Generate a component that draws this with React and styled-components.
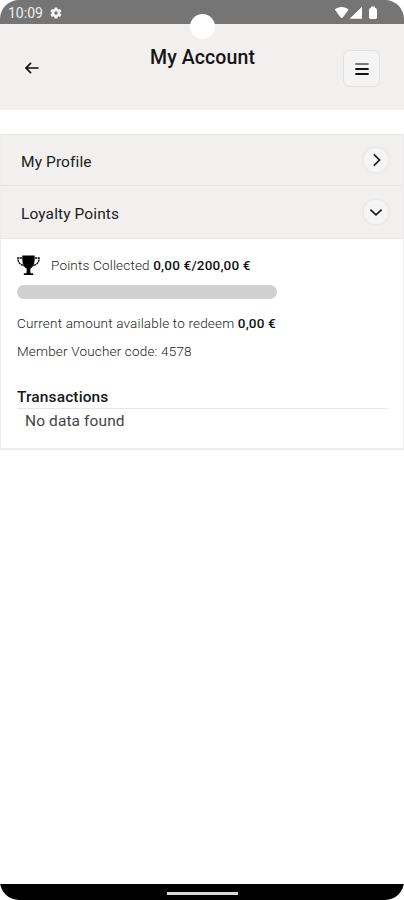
import React, { useState } from "react";
import styled, { createGlobalStyle } from "styled-components";

const account = {
  collected: "0,00 €",
  target: "200,00 €",
  redeemable: "0,00 €",
  voucher: "4578",
  progress: 0,
};

const GearIcon = () => (
  <svg width="14" height="14" viewBox="0 0 24 24" fill="#f5f5f5">
    <path d="M19.1 12.9a7 7 0 0 0 0-1.8l2-1.6a.5.5 0 0 0 .2-.6l-2-3.4a.5.5 0 0 0-.6-.2l-2.4 1a7 7 0 0 0-1.6-1l-.4-2.5a.5.5 0 0 0-.5-.4h-3.8a.5.5 0 0 0-.5.4l-.4 2.5a7 7 0 0 0-1.6 1l-2.4-1a.5.5 0 0 0-.6.2l-2 3.4a.5.5 0 0 0 .2.6l2 1.6a7 7 0 0 0 0 1.8l-2 1.6a.5.5 0 0 0-.2.6l2 3.4c.1.2.4.3.6.2l2.4-1a7 7 0 0 0 1.6 1l.4 2.5c0 .2.2.4.5.4h3.8c.3 0 .5-.2.5-.4l.4-2.5a7 7 0 0 0 1.6-1l2.4 1c.2.1.5 0 .6-.2l2-3.4a.5.5 0 0 0-.2-.6zM12 15a3 3 0 1 1 0-6 3 3 0 0 1 0 6z" />
  </svg>
);

const SignalIcons = () => (
  <svg width="44" height="14" viewBox="0 0 44 14" fill="#fff">
    <path d="M.8 3.6C4.2.2 11 .2 14.6 3.6L8.8 11.4Q7.7 12.8 6.6 11.4Z" />
    <path d="M28 .8V12.8H15.6Z" />
    <path d="M37.3.4h3.4v1.2Q43 2.6 43 4v7.6q0 1.4-1.4 1.4h-5.2q-1.4 0-1.4-1.4V4q0-1.4 2.3-2.4Z" />
  </svg>
);

const BackIcon = () => (
  <svg width="16" height="14" viewBox="0 0 16 14" fill="none" stroke="#111" strokeWidth="1.7">
    <path d="M7 1.8 2 7l5 5.2M2 7h12.6" />
  </svg>
);

const MenuIcon = () => (
  <svg width="14" height="14" viewBox="0 0 14 14" fill="none" strokeWidth="1.8" strokeLinecap="round">
    <path d="M1 2h12" stroke="#777" />
    <path d="M1 7h12M1 12h12" stroke="#111" />
  </svg>
);

const Chevron = ({ down }) => (
  <svg width="14" height="14" viewBox="0 0 14 14" fill="none" stroke="#1c1c1c" strokeWidth="1.7">
    <path d={down ? "M1.4 4.6 7 9.8l5.6-5.2" : "M4.9 1.4 10.5 7l-5.6 5.6"} />
  </svg>
);

const TrophyIcon = () => (
  <svg width="23" height="21" viewBox="0 0 23 21">
    <path d="M5.2 3H.9C.9 7.4 3 9.6 7.2 10.7M17.8 3h4.3C22.1 7.4 20 9.6 15.8 10.7" fill="none" stroke="#111" strokeWidth="1.4" strokeDasharray="2.4 .5" />
    <path d="M5.4.6h12.2c.5 6.4-.5 11.2-4.3 13.2v4.4h-3.6v-4.4C5.9 11.8 4.9 7 5.4.6z" />
    <path d="M9.7 16.8h3.6v1.4h2.9v1.7H6.8v-1.7h2.9z" />
  </svg>
);

export default function App() {
  const [open, setOpen] = useState(true);

  return (
    <>
      <GlobalStyle />
      <Phone>
        <StatusBar>
          <Clock>10:09</Clock>
          <GearIcon />
          <Signals><SignalIcons /></Signals>
          <Camera />
        </StatusBar>
        <Header>
          <BackButton aria-label="Back"><BackIcon /></BackButton>
          <Title>My Account</Title>
          <MenuButton aria-label="Menu"><MenuIcon /></MenuButton>
        </Header>
        <Accordion>
          <SectionRow>
            <SectionName>My Profile</SectionName>
            <Circle><Chevron /></Circle>
          </SectionRow>
          <SectionRow $last onClick={() => setOpen(!open)}>
            <SectionName>Loyalty Points</SectionName>
            <Circle><Chevron down={open} /></Circle>
          </SectionRow>
          {open && (
            <Panel>
              <Points>
                <TrophyIcon />
                <Info>
                  Points Collected <b>{account.collected}/{account.target}</b>
                </Info>
              </Points>
              <Track>
                <Fill style={{ width: `${account.progress}%` }} />
              </Track>
              <Info>
                Current amount available to redeem <b>{account.redeemable}</b>
              </Info>
              <Info $gap>Member Voucher code: {account.voucher}</Info>
              <Transactions>Transactions</Transactions>
              <Empty>No data found</Empty>
            </Panel>
          )}
        </Accordion>
        <NavBar><Handle /></NavBar>
      </Phone>
    </>
  );
}

const GlobalStyle = createGlobalStyle`
  * {
    box-sizing: border-box;
  }

  body {
    margin: 0;
    background: #fff;
    font-family: Roboto, sans-serif;
  }

  button {
    padding: 0;
    border: 0;
    background: none;
  }

  svg {
    display: block;
    flex-shrink: 0;
  }
`;

const Phone = styled.div`
  width: 404px;
  height: 900px;
  display: flex;
  flex-direction: column;
  overflow: hidden;
  border-radius: 19px;
  background: #fff;
`;

const StatusBar = styled.div`
  position: relative;
  height: 24px;
  flex-shrink: 0;
  display: flex;
  align-items: center;
  padding: 1px 26px 0 8px;
  background: #757575;
`;

const Clock = styled.div`
  width: 41px;
  font-size: 14px;
  line-height: 20px;
  color: #eee;
`;

const Signals = styled.div`
  margin-left: auto;
`;

const Camera = styled.div`
  position: absolute;
  top: 14px;
  left: 190px;
  width: 25px;
  height: 25px;
  border-radius: 50%;
  background: #fff;
`;

const Header = styled.header`
  height: 86px;
  flex-shrink: 0;
  display: flex;
  align-items: flex-start;
  justify-content: space-between;
  padding: 0 24px 0 24px;
  background: #f1f0ef;
`;

const BackButton = styled.button`
  width: 38px;
  margin-top: 37px;
`;

const Title = styled.h1`
  margin: 22px 0 0;
  font-size: 19.5px;
  font-weight: 500;
  line-height: 24px;
  letter-spacing: 0.1px;
  color: #151515;
`;

const MenuButton = styled.button`
  width: 37px;
  height: 37px;
  margin-top: 26px;
  display: flex;
  align-items: center;
  justify-content: center;
  border: 1px solid #e1e2e2;
  border-radius: 7px;
  background: #f4f4f4;
`;

const Accordion = styled.section`
  margin-top: 24px;
  border: 1px solid #ededed;
  border-width: 0 1px 2px 1px;
`;

const SectionRow = styled.div`
  height: ${({ $last }) => ($last ? "54px" : "51px")};
  display: flex;
  align-items: center;
  justify-content: space-between;
  padding: 0 13px 0 20px;
  border-top: 1px solid #e5e5e4;
  border-bottom: ${({ $last }) => ($last ? "1px solid #e7e7e7" : "0")};
  background: #f1f0ef;
`;

const SectionName = styled.div`
  padding-top: 3px;
  font-size: 15.5px;
  font-weight: 400;
  line-height: 20px;
  letter-spacing: 0.1px;
  color: #202020;
`;

const Circle = styled.div`
  width: 28px;
  height: 28px;
  display: flex;
  align-items: center;
  justify-content: center;
  border: 2px solid #e9eaea;
  border-radius: 50%;
  background: #f5f5f5;
`;

const Panel = styled.div`
  height: 209px;
  padding: 15px 15px 0 16px;
`;

const Points = styled.div`
  display: flex;
  align-items: center;
  gap: 11px;
  height: 22px;
`;

const Info = styled.p`
  margin: ${({ $gap }) => ($gap ? "8px 0 0" : "0")};
  font-size: 13.5px;
  font-weight: 300;
  line-height: 20px;
  letter-spacing: 0.18px;
  color: #222;
  white-space: nowrap;

  b {
    font-weight: 500;
    color: #111;
  }
`;

const Track = styled.div`
  width: 260px;
  height: 14px;
  margin: 9px 0 14px;
  overflow: hidden;
  border-radius: 7px;
  background: #d0d0d0;
`;

const Fill = styled.div`
  height: 100%;
  background: #000;
`;

const Transactions = styled.h2`
  margin: 26px 0 0;
  height: 22px;
  font-size: 15.5px;
  font-weight: 500;
  line-height: 20px;
  letter-spacing: 0.12px;
  color: #181818;
  border-bottom: 1px solid #e8e8e8;
`;

const Empty = styled.div`
  padding: 2px 0 0 8px;
  font-size: 15.5px;
  line-height: 20px;
  letter-spacing: 0.1px;
  color: #444;
`;

const NavBar = styled.footer`
  height: 16px;
  margin-top: auto;
  flex-shrink: 0;
  display: flex;
  justify-content: center;
  padding-top: 8px;
  background: #000;
`;

const Handle = styled.div`
  width: 71px;
  height: 3px;
  background: #d8d8d8;
`;
